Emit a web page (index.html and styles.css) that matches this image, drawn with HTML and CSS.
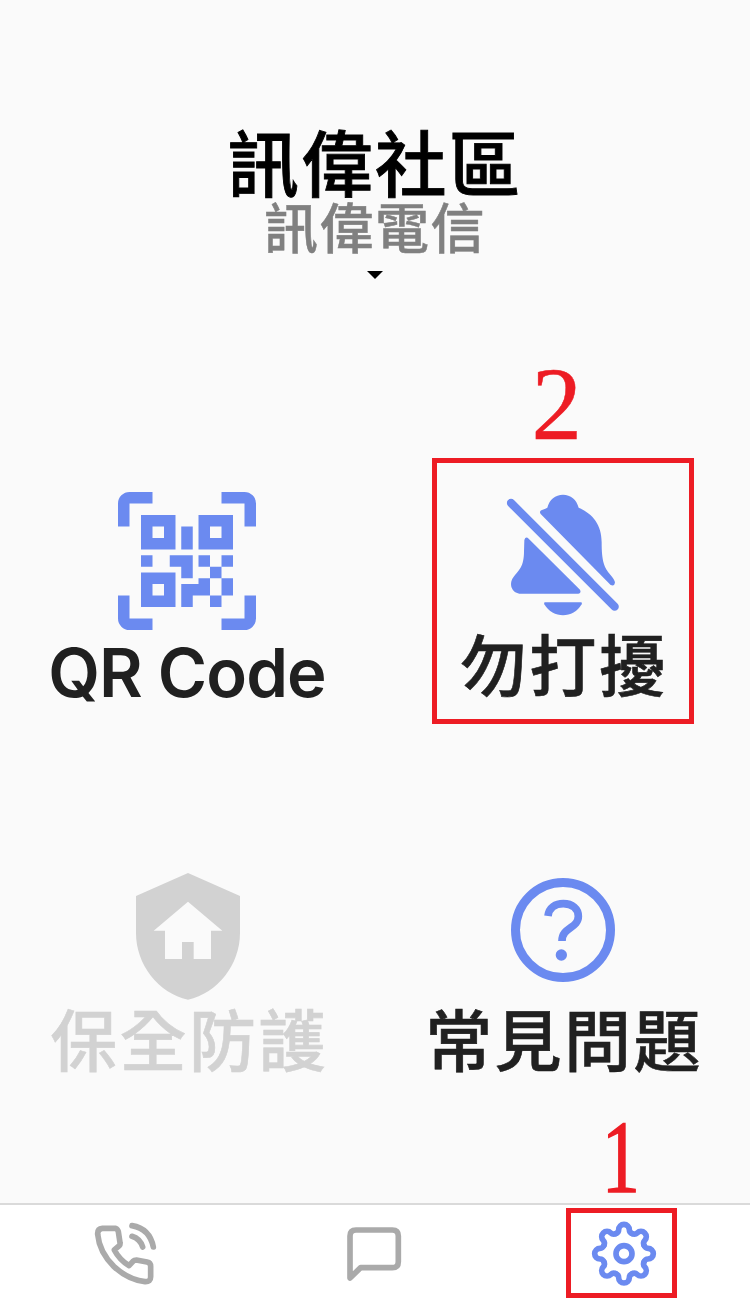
FILE: index.html
```
<!DOCTYPE html>
<html lang="zh-Hant">
<head>
  <meta charset="utf-8">
  <title>訊偉社區</title>
  <link rel="stylesheet" href="styles.css">
</head>
<body>
  <header class="header">
    <h1 class="title">訊偉社區</h1>
    <div class="subtitle">訊偉電信</div>
    <div class="arrow"></div>
  </header>

  <main class="menu">
    <div class="item qr-item">
      <svg class="icon qr" viewBox="0 0 24 24">
        <path d="M0 6V2A2 2 0 0 1 2 0H6V2H2V6zM18 0H22A2 2 0 0 1 24 2V6H22V2H18zM24 18V22A2 2 0 0 1 22 24H18V22H22V18zM6 24H2A2 2 0 0 1 0 22V18H2V22H6z"/>
        <path fill-rule="evenodd" d="M4 4H10V10H4zM6 6V8H8V6zM14 4H20V10H14zM16 6V8H18V6zM4 14H10V20H4zM6 16V18H8V16z"/>
        <path d="M11 6H13V10H11zM4 11H6V13H4zM9 11H13V15H11V13H9zM14 11H16V13H14zM18 11H20V13H18zM16 13H18V15H16zM14 15H16V18H13V20H11V16H14zM18 15H20V18H18zM16 18H18V20H16z"/>
      </svg>
      <div class="label latin">QR Code</div>
    </div>

    <div class="item">
      <svg class="icon bell" viewBox="240 400 348 370">
        <path d="M258 430L569 741" stroke="#6b8af0" stroke-width="25" stroke-linecap="round"/>
        <path d="M347 463Q342 456 349 452Q358 449 367 444C373 420 391 405 414 405C437 405 455 420 461 444C502 462 530 494 530 548C530 604 537 624 556 645Q570 661 570 669Q568 681 557 676z"/>
        <path d="M298 541Q302 529 311 537L465 690Q470 699 460 702H288C262 702 250 675 264 654C283 631 297 620 297 575z"/>
        <path d="M360 728H468Q472 729 470 734C445 778 383 778 358 734Q356 729 360 728z"/>
      </svg>
      <div class="label">勿打擾</div>
      <div class="mark mark-bell"><span class="num num-two">2</span></div>
    </div>

    <div class="item off">
      <svg class="icon shield" viewBox="0 0 312 380">
        <path fill-rule="evenodd" d="M156 0L312 69V180C312 275 245 360 156 380C67 360 0 275 0 180V69zM156 86L53 173H87V258H138V207H173V258H225V173H259z"/>
      </svg>
      <div class="label">保全防護</div>
    </div>

    <div class="item">
      <svg class="icon help" viewBox="0 0 312 312">
        <circle class="line" cx="156" cy="156" r="142.500"/>
        <path class="line mid" d="M111 114C114 88 134 77 157 77C184 77 202 92 202 115C202 151 153 147 153 189"/>
        <circle cx="151" cy="231" r="17"/>
      </svg>
      <div class="label">常見問題</div>
    </div>
  </main>

  <nav class="tabs">
    <div class="tab">
      <svg class="tab-icon" viewBox="40 74 192 196">
        <path d="M108 96Q114 98 116 106L121 139Q122 144 119 148L104 161Q119 190 148 208L160 195Q164 191 170 191L202 197Q213 199 213 210V241Q213 257 196 256Q147 251 103 211Q59 168 54 114Q53 97 68 96z"/>
        <path d="M157 88Q210 97 221 152M157 120Q181 127 189 152"/>
      </svg>
    </div>
    <div class="tab">
      <svg class="tab-icon" viewBox="36 77 192 196">
        <path d="M60 248V122Q60 104 78 104H187Q205 104 205 122V199Q205 217 187 217H92z"/>
      </svg>
    </div>
    <div class="tab active">
      <svg class="tab-icon" viewBox="-96 -98 192 196">
        <defs>
          <path id="tooth" d="M-25-60C-20-62-16-67-16-72A16 16 0 0 1 16-72C16-67 20-62 25-60"/>
        </defs>
        <use href="#tooth"/>
        <use href="#tooth" transform="rotate(45)"/>
        <use href="#tooth" transform="rotate(90)"/>
        <use href="#tooth" transform="rotate(135)"/>
        <use href="#tooth" transform="rotate(180)"/>
        <use href="#tooth" transform="rotate(225)"/>
        <use href="#tooth" transform="rotate(270)"/>
        <use href="#tooth" transform="rotate(315)"/>
        <circle r="24"/>
      </svg>
      <div class="mark mark-tab"><span class="num num-one">1</span></div>
    </div>
  </nav>
</body>
</html>
```
FILE: styles.css
```
* {
  box-sizing: border-box;
}

body {
  margin: 0;
  height: 1301px;
  display: flex;
  flex-direction: column;
  overflow: hidden;
  background: #fafafa;
  color: #202020;
  font-family: Inter, "Noto Sans CJK TC", sans-serif;
}

.header {
  height: 492px;
  padding-top: 128px;
  display: flex;
  flex-direction: column;
  align-items: center;
}

.title {
  margin: 0;
  font-size: 71.5px;
  line-height: 75px;
  letter-spacing: 2.3px;
  font-weight: 500;
  color: #000;
  -webkit-text-stroke: 0.9px #000;
}

.subtitle {
  font-size: 54px;
  line-height: 53px;
  letter-spacing: 1.5px;
  font-weight: 500;
  color: #808080;
  -webkit-text-stroke: 0.5px #808080;
}

.arrow {
  margin-top: 15px;
  border: 8px solid transparent;
  border-top-color: #000;
  border-bottom: 0;
}

.menu {
  flex: 1;
  display: grid;
  grid-template-columns: 376px 374px;
  grid-template-rows: 381px 1fr;
}

.item {
  position: relative;
  display: flex;
  flex-direction: column;
  align-items: center;
}

.qr-item {
  padding-right: 2px;
}

.icon {
  fill: #6b8af0;
}

.qr {
  width: 138px;
  height: 138px;
}

.bell {
  width: 116px;
  height: 123.3px;
  margin: 1px 0 15.7px 0;
}

.shield {
  width: 104px;
  height: 126.7px;
  margin-bottom: 7.3px;
}

.help {
  width: 104px;
  height: 104px;
  margin: 5px 0 25px;
}

.line {
  fill: none;
  stroke: #6b8af0;
  stroke-width: 27;
}

.mid {
  stroke-width: 23;
}

.label {
  padding-left: 2px;
  font-size: 67px;
  line-height: 70px;
  letter-spacing: 2.4px;
  font-weight: 500;
  white-space: nowrap;
  -webkit-text-stroke: 0.6px currentColor;
}

.latin {
  padding-left: 0;
  font-size: 67px;
  line-height: 86px;
  font-weight: 600;
  letter-spacing: -0.9px;
  -webkit-text-stroke: 0;
}

.off {
  color: #d2d2d2;
}

.off .icon {
  fill: #d2d2d2;
}

.tabs {
  height: 98px;
  border-top: 2px solid #dadada;
  background: #fff;
  display: grid;
  grid-template-columns: 250px 248px 252px;
}

.tab {
  position: relative;
  display: flex;
  justify-content: center;
  padding-top: 16px;
}

.active {
  padding-right: 1px;
}

.tab-icon {
  width: 64px;
  height: 65.3px;
  overflow: visible;
  fill: none;
  stroke: #aaa;
  stroke-width: 17;
  stroke-linecap: round;
  stroke-linejoin: round;
}

.active .tab-icon {
  stroke: #6b8af0;
}

/* red step markers */
.mark {
  position: absolute;
  border: 5px solid #ed1c24;
  color: #ed1c24;
}

.mark-bell {
  left: 56px;
  top: -34px;
  width: 262px;
  height: 266px;
}

.mark-tab {
  left: 68px;
  top: 3px;
  width: 111px;
  height: 90px;
}

.num {
  position: absolute;
  font-family: "Liberation Serif", serif;
  font-size: 103px;
  line-height: 100px;
  -webkit-text-stroke: 0.5px #ed1c24;
}

.num-two {
  left: 94px;
  top: -109px;
  transform: scaleX(0.98);
}

.num-one {
  left: 24px;
  top: -106px;
  transform: scaleX(0.74);
  -webkit-text-stroke: 1.5px #ed1c24;
}
```
